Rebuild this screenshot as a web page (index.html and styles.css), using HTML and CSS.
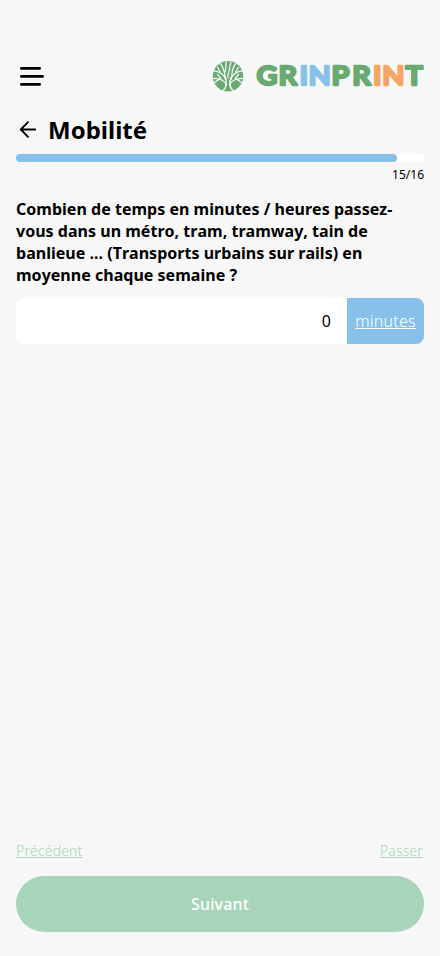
FILE: index.html
```html
<!DOCTYPE html>
<html lang="fr">
<head>
<meta charset="utf-8">
<meta name="viewport" content="width=device-width, initial-scale=1">
<title>Grinprint – Mobilité</title>
<link rel="stylesheet" href="styles.css">
</head>
<body>
<div class="screen">
  <header class="topbar">
    <button class="icon-button" aria-label="Menu">
      <svg width="32" height="32" viewBox="0 0 32 32" fill="none" stroke="#000" stroke-width="2.8" stroke-linecap="round"><path d="M5.4 8.4h18.2M5.4 16.4h21.2M5.4 24.4h18.2"/></svg>
    </button>
    <svg class="logo" width="212" height="32" viewBox="0 0 212 32" role="img" aria-label="Grinprint">
      <circle cx="16" cy="16.3" r="15.2" fill="#6aaa72"/>
      <g fill="none" stroke="#f7f7f7" stroke-linecap="round" stroke-linejoin="round">
        <path d="M11.5 30.2C14.6 27 14.8 21 13.4 16.5M20.5 30.2C17.6 27 17.2 22 19.2 17" stroke-width="1.4"/>
        <path d="M14.3 25C13 21 8 18 1 18.3M8 18.6L2.8 22.4M8.6 18.2L5.6 14.5M13.5 19.5C12 14 7 11.5 2.2 10.8M8.2 12L5.6 7.3M13 16C12.3 10 10.7 6.5 8.3 3.3M12.6 13C14.8 10 13.2 6 14.2 1.5" stroke-width="1.2"/>
        <path d="M16 18C15.3 12 18.5 10.5 17.8 6.5L19 1.8M17.7 25C19 21 24 18 31 18.3M24 18.6L29.2 22.4M23.4 18.2L26.5 14.5M19 19.5C20.5 14 25 11.5 29.8 10.8M23.7 12L26.4 7.3M19.8 15.5C20 10 21.5 6.5 23.7 3.6" stroke-width="1.2"/>
      </g>
      <g class="wordmark" transform="scale(1.07 1)">
        <text y="25.3"><tspan class="green" x="41.6">G</tspan><tspan class="green" x="62.1">R</tspan><tspan class="blue" x="81.8">I</tspan><tspan class="blue" x="90.2">N</tspan><tspan class="green" x="111.7">P</tspan><tspan class="green" x="131">R</tspan><tspan class="orange" x="150.4">I</tspan><tspan class="orange" x="159">N</tspan><tspan class="green" x="180.9">T</tspan></text>
      </g>
    </svg>
  </header>
  <main>
    <div class="title-row">
      <svg width="24" height="24" viewBox="0 0 24 24" fill="none" stroke="#000" stroke-width="1.8" stroke-linecap="round" stroke-linejoin="round"><path d="M19.2 11.5H4.8M12 4.2L4.8 11.5l7.2 7.3"/></svg>
      <h1>Mobilité</h1>
    </div>
    <div class="progress"><div class="progress-fill"></div></div>
    <div class="count">15/16</div>
    <h2>Combien de temps en minutes / heures passez-vous dans un métro, tram, tramway, tain de banlieue ... (Transports urbains sur rails) en moyenne chaque semaine ?</h2>
    <div class="field"><span class="value">0</span><span class="unit">minutes</span></div>
  </main>
  <footer>
    <nav class="links"><a>Précédent</a><a>Passer</a></nav>
    <button class="next">Suivant</button>
  </footer>
</div>
</body>
</html>
```
FILE: styles.css
```css
* { box-sizing: border-box; }
body {
  margin: 0;
  background: #f7f7f7;
  color: #000;
  font-family: "Noto Sans", sans-serif;
  font-kerning: none;
}
.screen {
  display: flex;
  flex-direction: column;
  height: 956px;
  padding: 60px 16px 24px;
}
.topbar {
  display: flex;
  justify-content: space-between;
  align-items: center;
  height: 32px;
}
.icon-button { padding: 0; border: 0; background: none; height: 32px; }
.logo { overflow: visible; }
.wordmark text {
  font: 700 27px Lato, sans-serif;
  stroke-width: 2.3px;
  stroke-linejoin: round;
}
.green { fill: #6aaa72; stroke: #6aaa72; }
.blue { fill: #87c1e9; stroke: #87c1e9; }
.orange { fill: #f7a563; stroke: #f7a563; }
main { flex: 1; }
.title-row {
  display: flex;
  align-items: center;
  gap: 8px;
  height: 33px;
  margin-top: 21px;
}
h1 { margin: 0; font-size: 24px; line-height: 33px; font-weight: 700; }
.progress {
  height: 8px;
  margin-top: 8px;
  border-radius: 4px;
  background: #fff;
}
.progress-fill {
  width: 381px;
  height: 8px;
  border-radius: 4px;
  background: #87c1e9;
}
.count {
  margin-top: 4px;
  font-size: 12px;
  line-height: 17px;
  text-align: right;
}
h2 {
  margin: 15px 0 12px;
  font-size: 16px;
  line-height: 22px;
  font-weight: 700;
  letter-spacing: 0.02px;
}
.field {
  display: flex;
  height: 46px;
  border-radius: 8px;
  overflow: hidden;
  background: #fff;
  font-size: 16px;
  line-height: 46px;
}
.value { flex: 1; padding-right: 16px; text-align: right; }
.unit {
  width: 77px;
  background: #87c1e9;
  color: #fff;
  font-weight: 300;
  letter-spacing: 0.25px;
  text-align: center;
  text-decoration: underline;
  text-decoration-thickness: 1px;
}
.links {
  display: flex;
  justify-content: space-between;
  margin-bottom: 16px;
  padding-right: 1px;
  color: #a8d5ba;
  font-size: 14px;
  font-weight: 300;
  letter-spacing: 0.15px;
  line-height: 19px;
}
.links a { text-decoration: underline; text-decoration-thickness: 1px; }
.next {
  display: block;
  width: 100%;
  height: 56px;
  border: 0;
  border-radius: 28px;
  background: #a8d5ba;
  color: #fff;
  font: 500 16px "Noto Sans", sans-serif;
  letter-spacing: 0.15px;
}
```
